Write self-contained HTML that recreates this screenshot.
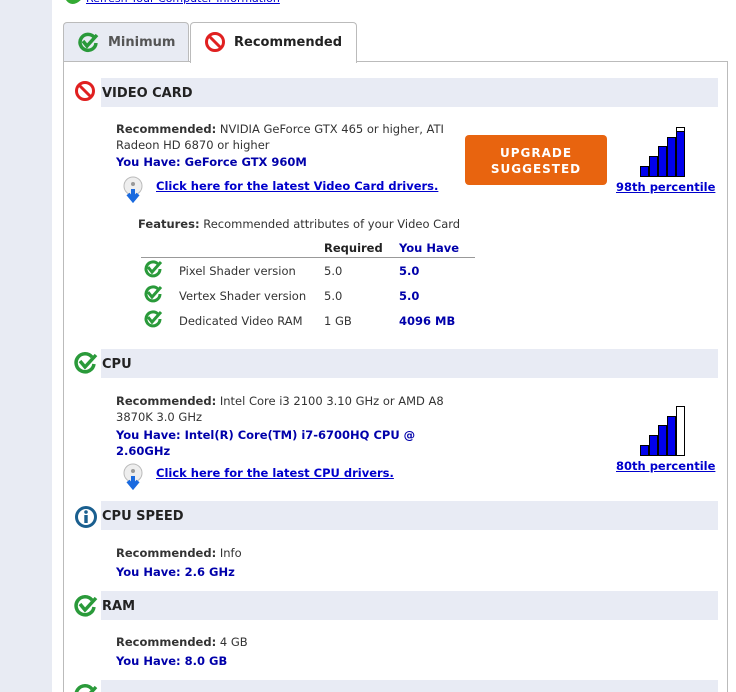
<!DOCTYPE html>
<html style="height:692px;overflow:hidden"><head><style>
body{margin:0;width:736px;height:692px;overflow:hidden;background:#fff;font-family:"DejaVu Sans","Liberation Sans",sans-serif;font-size:11.5px;color:#333;position:relative}
.a{position:absolute;white-space:nowrap}
.side{left:0;top:0;width:52px;height:692px;background:#e8ebf3}
.panel{left:63px;top:61px;width:663px;height:631px;border:1px solid #bbb;border-bottom:none}
.tab{top:22px;height:38px;border:1px solid #bbb;border-bottom:none;border-radius:4px 4px 0 0;font-weight:bold;font-size:13px}
.bar{left:101px;width:617px;height:29px;background:#e8ebf4;font-weight:bold;font-size:13px;color:#222;line-height:32px}
.bar span{padding-left:1px}
b{color:#333}
.blue{color:#0000aa;font-weight:bold}
a{color:#0000cc;font-weight:bold;text-decoration:underline}
</style></head><body>
<div class="a side"></div>
<svg class="a" style="left:64px;top:-8px" width="20" height="14"><path d="M3 6 Q8 14 16 6" stroke="#3a3" stroke-width="4" fill="none"/></svg>
<div class="a" style="left:86px;top:-8px;font-size:11px"><a style="font-weight:normal">Refresh Your Computer Information</a></div>
<div class="a panel"></div>
<div class="a tab" style="left:63px;width:124px;background:#e8ebf3;color:#555">
<svg class="a" style="left:13px;top:8px" width="22" height="22"><path d="M17 6 A8 8 0 1 0 19 12" stroke="#2a9a3a" stroke-width="3.5" fill="none"/><path d="M6 10 L10 15 L20 4" stroke="#2a9a3a" stroke-width="3.5" fill="none"/></svg>
<span class="a" style="left:44px;top:12px">Minimum</span></div>
<div class="a tab" style="left:190px;width:165px;background:#fff;height:40px;color:#222">
<svg class="a" style="left:13px;top:8px" width="22" height="22"><circle cx="11" cy="11" r="8.5" stroke="#e02020" stroke-width="3" fill="none"/><path d="M5 5 L17 17" stroke="#e02020" stroke-width="3"/></svg>
<span class="a" style="left:43px;top:12px">Recommended</span></div>

<!-- VIDEO CARD -->
<svg class="a" style="left:74px;top:80px" width="22" height="22"><circle cx="11" cy="11" r="8.5" stroke="#e02020" stroke-width="3" fill="none"/><path d="M5 5 L17 17" stroke="#e02020" stroke-width="3"/></svg>
<div class="a bar" style="top:78px"><span>VIDEO CARD</span></div>
<div class="a" style="left:116px;top:121px;line-height:16px"><b>Recommended:</b> NVIDIA GeForce GTX 465 or higher, ATI<br>Radeon HD 6870 or higher</div>
<div class="a blue" style="left:116px;top:155px">You Have: GeForce GTX 960M</div>
<svg class="a" style="left:121px;top:175px" width="24" height="28"><circle cx="12" cy="11" r="9" fill="#eee" stroke="#bbb"/><circle cx="12" cy="9" r="2" fill="#999"/><path d="M12 14 V24 M7 19 L12 25 L17 19" stroke="#1a6adf" stroke-width="4" fill="none"/></svg>
<div class="a" style="left:156px;top:179px"><a>Click here for the latest Video Card drivers.</a></div>
<div class="a" style="left:465px;top:135px;width:142px;height:50px;background:#e8640f;border-radius:4px;color:#fff;font-weight:bold;font-size:12px;text-align:center;line-height:16px;padding-top:10px;box-sizing:border-box;letter-spacing:1px">UPGRADE<br>SUGGESTED</div>
<svg class="a" style="left:639px;top:126px" width="48" height="52"><g fill="#0000ee" stroke="#000"><rect x="1.5" y="40.5" width="8" height="10"/><rect x="10.5" y="30.5" width="8" height="20"/><rect x="19.5" y="20.5" width="8" height="30"/><rect x="28.5" y="11.5" width="8" height="39"/><rect x="37.5" y="1.5" width="8" height="49"/></g><rect x="37.5" y="1.5" width="8" height="4" fill="#fff" stroke="#000"/></svg>
<div class="a" style="left:616px;top:180px"><a>98th percentile</a></div>
<div class="a" style="left:138px;top:217px"><b>Features:</b> Recommended attributes of your Video Card</div>
<div class="a" style="left:324px;top:241px;font-weight:bold;color:#222">Required</div>
<div class="a blue" style="left:399px;top:241px">You Have</div>
<div class="a" style="left:141px;top:257px;width:334px;height:1px;background:#999"></div>
<div class="a" style="left:179px;top:264px">Pixel Shader version</div><div class="a" style="left:324px;top:264px">5.0</div><div class="a blue" style="left:399px;top:264px">5.0</div>
<div class="a" style="left:179px;top:289px">Vertex Shader version</div><div class="a" style="left:324px;top:289px">5.0</div><div class="a blue" style="left:399px;top:289px">5.0</div>
<div class="a" style="left:179px;top:314px">Dedicated Video RAM</div><div class="a" style="left:324px;top:314px">1 GB</div><div class="a blue" style="left:399px;top:314px">4096 MB</div>
<svg class="a" style="left:144px;top:260px" width="20" height="70"><g stroke="#2a9a3a" stroke-width="3" fill="none"><path d="M14 4 A7 7 0 1 0 16 9"/><path d="M4 7 L8 12 L17 2"/><path transform="translate(0,25)" d="M14 4 A7 7 0 1 0 16 9"/><path transform="translate(0,25)" d="M4 7 L8 12 L17 2"/><path transform="translate(0,50)" d="M14 4 A7 7 0 1 0 16 9"/><path transform="translate(0,50)" d="M4 7 L8 12 L17 2"/></g></svg>

<!-- CPU -->
<svg class="a" style="left:74px;top:351px" width="24" height="24"><path d="M18 6 A9 9 0 1 0 20 13" stroke="#2a9a3a" stroke-width="3.5" fill="none"/><path d="M6 10 L11 16 L22 4" stroke="#2a9a3a" stroke-width="3.5" fill="none"/></svg>
<div class="a bar" style="top:349px"><span>CPU</span></div>
<div class="a" style="left:116px;top:393px;line-height:16px"><b>Recommended:</b> Intel Core i3 2100 3.10 GHz or AMD A8<br>3870K 3.0 GHz</div>
<div class="a blue" style="left:116px;top:427px;line-height:16px">You Have: Intel(R) Core(TM) i7-6700HQ CPU @<br>2.60GHz</div>
<svg class="a" style="left:121px;top:462px" width="24" height="28"><circle cx="12" cy="11" r="9" fill="#eee" stroke="#bbb"/><circle cx="12" cy="9" r="2" fill="#999"/><path d="M12 14 V24 M7 19 L12 25 L17 19" stroke="#1a6adf" stroke-width="4" fill="none"/></svg>
<div class="a" style="left:156px;top:466px"><a>Click here for the latest CPU drivers.</a></div>
<svg class="a" style="left:639px;top:405px" width="48" height="52"><g fill="#0000ee" stroke="#000"><rect x="1.5" y="40.5" width="8" height="10"/><rect x="10.5" y="30.5" width="8" height="20"/><rect x="19.5" y="20.5" width="8" height="30"/><rect x="28.5" y="11.5" width="8" height="39"/><rect x="37.5" y="1.5" width="8" height="49" fill="#fff"/></g></svg>
<div class="a" style="left:616px;top:459px"><a>80th percentile</a></div>

<!-- CPU SPEED -->
<svg class="a" style="left:74px;top:505px" width="24" height="24"><circle cx="12" cy="12" r="9.5" stroke="#1a5f8f" stroke-width="3" fill="none"/><circle cx="12" cy="7" r="1.8" fill="#1a5f8f"/><rect x="10.3" y="10" width="3.4" height="8" fill="#1a5f8f"/></svg>
<div class="a bar" style="top:501px"><span>CPU SPEED</span></div>
<div class="a" style="left:116px;top:546px"><b>Recommended:</b> Info</div>
<div class="a blue" style="left:116px;top:565px">You Have: 2.6 GHz</div>

<!-- RAM -->
<svg class="a" style="left:74px;top:594px" width="24" height="24"><path d="M18 6 A9 9 0 1 0 20 13" stroke="#2a9a3a" stroke-width="3.5" fill="none"/><path d="M6 10 L11 16 L22 4" stroke="#2a9a3a" stroke-width="3.5" fill="none"/></svg>
<div class="a bar" style="top:591px"><span>RAM</span></div>
<div class="a" style="left:116px;top:635px"><b>Recommended:</b> 4 GB</div>
<div class="a blue" style="left:116px;top:654px">You Have: 8.0 GB</div>

<svg class="a" style="left:74px;top:683px" width="24" height="9"><path d="M18 6 A9 9 0 1 0 20 13" stroke="#2a9a3a" stroke-width="3.5" fill="none"/><path d="M6 10 L11 16 L22 4" stroke="#2a9a3a" stroke-width="3.5" fill="none"/></svg>
<div class="a bar" style="top:680px;height:12px"></div>
</body></html>
